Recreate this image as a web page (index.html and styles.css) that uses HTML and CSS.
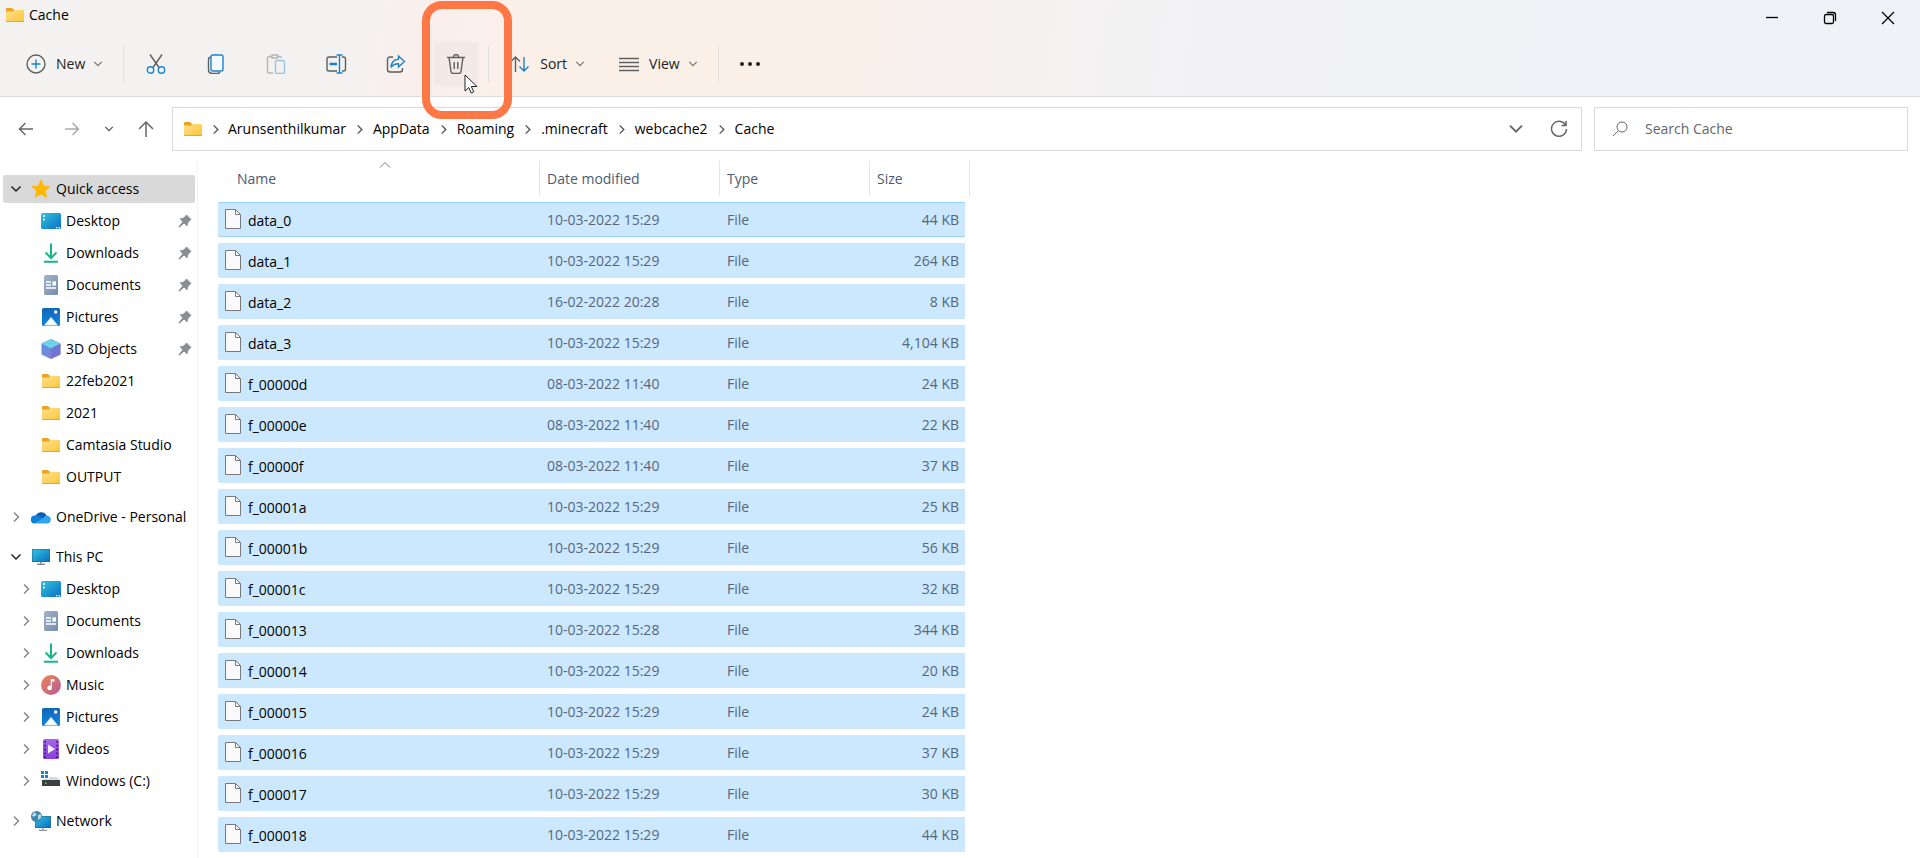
FILE: index.html
```html
<!DOCTYPE html>
<html lang="en">

<head>
    <meta charset="UTF-8">
    <meta name="viewport" content="width=device-width, initial-scale=1.0">
    <title>Cache</title>
    <link rel="stylesheet" href="styles.css">
</head>

<body>
    <!-- Shared icons -->
    <svg class="sprite" aria-hidden="true">
        <defs>
            <linearGradient id="gFolder" x1="0" y1="0" x2="1" y2="1">
                <stop offset="0" stop-color="#ffe08a"/>
                <stop offset="1" stop-color="#fcc53a"/>
            </linearGradient>
            <linearGradient id="gDesktop" x1="0" y1="0" x2="1" y2="1">
                <stop offset="0" stop-color="#2fc3e0"/>
                <stop offset="1" stop-color="#0b6fc0"/>
            </linearGradient>
            <linearGradient id="gDoc" x1="0" y1="0" x2="1" y2="1">
                <stop offset="0" stop-color="#a3b4cb"/>
                <stop offset="1" stop-color="#748bab"/>
            </linearGradient>
            <linearGradient id="gPic" x1="0" y1="0" x2="0" y2="1">
                <stop offset="0" stop-color="#1266b8"/>
                <stop offset="1" stop-color="#1286dd"/>
            </linearGradient>
            <linearGradient id="gMusic" x1="0" y1="0" x2="1" y2="1">
                <stop offset="0" stop-color="#f08650"/>
                <stop offset="1" stop-color="#b45a9c"/>
            </linearGradient>
            <linearGradient id="gVideo" x1="0" y1="0" x2="0" y2="1">
                <stop offset="0" stop-color="#a965ea"/>
                <stop offset="1" stop-color="#8a3fdc"/>
            </linearGradient>
            <linearGradient id="gCube" x1="0" y1="0" x2="1" y2="1">
                <stop offset="0" stop-color="#4c9be0"/>
                <stop offset="1" stop-color="#9b72d8"/>
            </linearGradient>
        </defs>
        <symbol id="folder" viewBox="0 0 20 20">
            <path d="M1 4a1 1 0 0 1 1-1h5l2 2v3H1z" fill="#eba51c"/>
            <path d="M1 6.500h7L9.500 5H18a1 1 0 0 1 1 1v10a1 1 0 0 1-1 1H2a1 1 0 0 1-1-1z" fill="url(#gFolder)"/>
            <path d="M1 16.500h18" stroke="#dfa63a"/>
        </symbol>
        <symbol id="star" viewBox="0 0 20 20">
            <path d="M10 1l2.700 6 6.300.6-4.800 4.300 1.500 6.500L10 15l-5.700 3.400 1.500-6.500L1 7.600 7.300 7z" fill="#ffb900" stroke="#fdb813" stroke-linejoin="round"/>
        </symbol>
        <symbol id="desktop" viewBox="0 0 20 20">
            <rect x="0" y="2" width="20" height="16" rx="1.500" fill="url(#gDesktop)"/>
            <path d="M2 4h2v2H2zM2 7.500h2v2H2zM15 16h1.500v1.500H15zM17.500 16H19v1.500h-1.500z" fill="#c7effa"/>
        </symbol>
        <symbol id="downloads" viewBox="0 0 20 20">
            <path d="M10 .5v14M4.500 9.500L10 15l5.500-5.500M3 18.700h14" fill="none" stroke="#18b78a" stroke-width="2"/>
        </symbol>
        <symbol id="documents" viewBox="0 0 20 20">
            <rect x="3" y="0" width="14" height="20" rx="1.500" fill="url(#gDoc)"/>
            <path d="M5 7h5M5 10h5M5 13h10" stroke="#fff" stroke-width="1.300"/>
            <path d="M11.500 6.300H15v4.300h-3.500z" fill="#fff"/>
        </symbol>
        <symbol id="pictures" viewBox="0 0 20 20">
            <rect x="1" y="1" width="18" height="18" rx="1.500" fill="url(#gPic)"/>
            <path d="M3 18.500l7-8.500 7 8.500z" fill="#f2f8fd"/>
            <circle cx="14.700" cy="5" r="1.700" fill="#fff"/>
        </symbol>
        <symbol id="cube" viewBox="0 0 20 20">
            <path d="M10 0l9.500 4.500v11L10 20 .5 15.500v-11z" fill="url(#gCube)"/>
            <path d="M10 0l9.500 4.500L10 9.500.5 4.500z" fill="#6fd0ea"/>
            <path d="M10 9.500l9.500-5v11L10 20z" fill="#6a72cc" opacity=".7"/>
        </symbol>
        <symbol id="cloud" viewBox="0 0 20 20">
            <path d="M4.500 9.500a6 6 0 0 1 11-1L9 15z" fill="#0a5cb4"/>
            <path d="M4 16.500a4 4 0 0 1-.5-8c3-.6 5 .4 8.500 3.400z" fill="#1181d8"/>
            <path d="M4 16.500l9.500-6.800c1-1 2.500-1.300 3.500-1a4 4 0 0 1-1 7.800z" fill="#2aa5ee"/>
        </symbol>
        <symbol id="pc" viewBox="0 0 20 20">
            <rect x="1" y="2" width="18" height="13" fill="#2b5f86"/>
            <rect x="1.500" y="2.500" width="17" height="12" fill="url(#gDesktop)"/>
            <path d="M9 15h2v2H9z" fill="#9aa4ad"/>
            <path d="M6 17.300h8" stroke="#6d7880" stroke-width="1.200"/>
        </symbol>
        <symbol id="music" viewBox="0 0 20 20">
            <circle cx="10" cy="10" r="10" fill="url(#gMusic)"/>
            <path d="M9.700 4h3.800v2.500h-2.600V13a2.300 2.300 0 1 1-1.200-2.200z" fill="#fff"/>
        </symbol>
        <symbol id="videos" viewBox="0 0 20 20">
            <rect x="2" y="0" width="16" height="20" rx="1.500" fill="url(#gVideo)"/>
            <path d="M4 2v17M16 2v17" stroke="#43207a" stroke-width="1.800" stroke-dasharray="1.800 2"/>
            <path d="M7 5.500l7 4.500-7 4.500z" fill="#f5ecff"/>
        </symbol>
        <symbol id="drive" viewBox="0 0 20 20">
            <path d="M0 0h3v3H0zM4 0h3v3H4zM0 4h3v3H0zM4 4h3v3H4z" fill="#1186d6"/>
            <path d="M8 6h8l3 3v1H1l2-2h5z" fill="#d9dadb"/>
            <rect x="1" y="9" width="18" height="6" fill="#3c4043"/>
            <path d="M4 11.500h1.500V13H4z" fill="#3fe05a"/>
        </symbol>
        <symbol id="network" viewBox="0 0 20 20">
            <path d="M4 5h16v12H4z" fill="#2b5f86"/>
            <path d="M4.500 5.500h15v11h-15z" fill="url(#gDesktop)"/>
            <path d="M12 17v2M8 19.300h8" stroke="#8b959c" stroke-width="1.200"/>
            <circle cx="5.500" cy="5.500" r="5.500" fill="#3f87ac"/>
            <path d="M3 1.500c2 0 3 2 2 3S1.500 6 1 4.500zM7 4l3-1v4L7 9z" fill="#b9dfe9"/>
        </symbol>
        <symbol id="pin" viewBox="0 0 14 14">
            <path d="M8.500 1L13 5.500l-1.300.8L9.500 9l-.3 2.700L6 9 1.500 13 1 12.500 5 8 2.300 4.800 5 4.500 7.700 2.300z" fill="#8b8f94" stroke="#8b8f94"/>
        </symbol>
        <symbol id="down" viewBox="0 0 12 12">
            <path d="M1.500 3.500L6 8l4.500-4.500" fill="none" stroke="currentColor" stroke-width="1.500"/>
        </symbol>
        <symbol id="right" viewBox="0 0 12 12">
            <path d="M4 1.500L8.500 6 4 10.500" fill="none" stroke="currentColor" stroke-width="1.500"/>
        </symbol>
        <symbol id="file" viewBox="0 0 16 20">
            <path d="M.5.5h10l5 5v14H.5z" fill="#fafafa" stroke="#77797c"/>
            <path d="M10.500.5v5h5" fill="none" stroke="#77797c"/>
        </symbol>
    </svg>

    <!-- Title bar and command bar -->
    <header class="ribbon">
        <div class="titlebar">
            <svg class="icon"><use href="#folder"/></svg>
            <h1 class="title">Cache</h1>
            <div class="window-buttons">
                <button aria-label="Minimize"><svg width="14" height="14" viewBox="0 0 14 14"><path d="M1 6.500h12"/></svg></button>
                <button aria-label="Restore"><svg width="14" height="14" viewBox="0 0 14 14"><rect x="1.500" y="3.500" width="9" height="9" rx="1.500"/><path d="M4 1.500h6a2.500 2.500 0 0 1 2.500 2.500v6"/></svg></button>
                <button aria-label="Close"><svg width="14" height="14" viewBox="0 0 14 14"><path d="M1 1l12 12M13 1L1 13"/></svg></button>
            </div>
        </div>
        <div class="toolbar">
            <button class="tool tool-new">
                <svg width="20" height="20" viewBox="0 0 20 20"><circle cx="10" cy="10" r="9"/><path class="blue" d="M10 5.500v9M5.500 10h9"/></svg>
                New
                <svg class="caret"><use href="#down"/></svg>
            </button>
            <span class="divider"></span>
            <div class="tool-group">
                <button class="tool" aria-label="Cut"><svg width="20" height="20" viewBox="0 0 20 20"><path d="M4 .5l9 13M16 .5l-9 13"/><g class="blue"><circle cx="4.500" cy="16" r="3.200"/><circle cx="15.500" cy="16" r="3.200"/></g></svg></button>
                <button class="tool" aria-label="Copy"><svg width="20" height="20" viewBox="0 0 20 20"><path d="M4.500 3Q2.500 3.500 2.500 5.500v10q0 4 4 4h5q2 0 2.500-1.500"/><rect class="blue" x="5" y="1" width="12" height="16" rx="2" fill="#f3f9fe"/></svg></button>
                <button class="tool faded" aria-label="Paste"><svg width="20" height="20" viewBox="0 0 20 20"><path d="M7 19H3a1.500 1.500 0 0 1-1.500-1.500V4A1.500 1.500 0 0 1 3 2.500h2.500M12 2.500h2A1.500 1.500 0 0 1 15.500 4M6 1h5.500v3H6z"/><rect class="blue" x="9.500" y="6.500" width="9" height="13" rx="1.500"/></svg></button>
                <button class="tool" aria-label="Rename"><svg width="22" height="20" viewBox="0 0 22 20"><path d="M12 17H4a2 2 0 0 1-2-2V5a2 2 0 0 1 2-2h8M17 3h1.500a2 2 0 0 1 2 2v10a2 2 0 0 1-2 2H17"/><path class="blue" d="M14.500 1v18M11.500 1h6M11.500 19h6"/><path class="blue thick" d="M4.500 10H12"/></svg></button>
                <button class="tool" aria-label="Share"><svg width="20" height="20" viewBox="0 0 20 20"><path d="M7 3H4a2.500 2.500 0 0 0-2.500 2.500v10A2.500 2.500 0 0 0 4 18h10a2.500 2.500 0 0 0 2.500-2.500V14"/><path class="blue" d="M12.500 2l6 5.500-6 5.500v-3.300C8.500 9.700 6.500 11 5 13.500c.3-5 3-8 7.500-8.200z"/></svg></button>
                <button class="tool active" aria-label="Delete">
                    <svg width="20" height="20" viewBox="0 0 20 20"><path d="M1 3.500h18M3 3.500l2 14q.3 2 2 2h6q1.700 0 2-2l2-14M7.500 3a2.500 2.500 0 0 1 5 0M8.200 8v7M11.800 8v7"/></svg>
                    <span class="callout"></span>
                    <svg class="cursor" width="14" height="20" viewBox="0 0 14 20"><path d="M1 1v16l3.700-3.500 2.500 5.500 2.600-1.200-2.500-5.300H13z" fill="#fff" stroke="#222" stroke-width="1"/></svg>
                </button>
            </div>
            <span class="divider"></span>
            <button class="tool tool-sort">
                <svg width="20" height="20" viewBox="0 0 20 20"><path d="M5.500 18V3M1 7.500L5.500 3l4.500 4.500"/><path class="blue" d="M14 3v14M9.500 12.500L14 17l4.500-4.500"/></svg>
                Sort
                <svg class="caret"><use href="#down"/></svg>
            </button>
            <button class="tool tool-view">
                <svg width="20" height="20" viewBox="0 0 20 20"><path d="M0 4.500h20M0 8.500h20M0 12.500h20M0 16.500h20"/></svg>
                View
                <svg class="caret"><use href="#down"/></svg>
            </button>
            <span class="divider"></span>
            <button class="tool tool-more" aria-label="See more"><svg width="22" height="20" viewBox="0 0 22 20"><g class="dots"><circle cx="3" cy="10" r="2"/><circle cx="11" cy="10" r="2"/><circle cx="19" cy="10" r="2"/></g></svg></button>
        </div>
    </header>

    <!-- Navigation -->
    <div class="navbar">
        <div class="nav-buttons">
            <button aria-label="Back"><svg width="16" height="16" viewBox="0 0 16 16"><path d="M15 8H2M7.500 2L1.500 8l6 6"/></svg></button>
            <button class="disabled" aria-label="Forward"><svg width="16" height="16" viewBox="0 0 16 16"><path d="M1 8h13M8.500 2l6 6-6 6"/></svg></button>
            <button class="recent" aria-label="Recent locations"><svg width="10" height="10"><use href="#down"/></svg></button>
            <button aria-label="Up"><svg width="18" height="18" viewBox="0 0 18 18"><path d="M9 17V2M2 9l7-7 7 7"/></svg></button>
        </div>
        <nav class="address">
            <svg class="icon"><use href="#folder"/></svg>
            <svg class="sep"><use href="#right"/></svg>
            <a href="#">Arunsenthilkumar</a>
            <svg class="sep"><use href="#right"/></svg>
            <a href="#">AppData</a>
            <svg class="sep"><use href="#right"/></svg>
            <a href="#">Roaming</a>
            <svg class="sep"><use href="#right"/></svg>
            <a href="#">.minecraft</a>
            <svg class="sep"><use href="#right"/></svg>
            <a href="#">webcache2</a>
            <svg class="sep"><use href="#right"/></svg>
            <a href="#">Cache</a>
            <div class="address-tools">
                <button aria-label="Previous locations"><svg width="16" height="16"><use href="#down"/></svg></button>
                <button aria-label="Refresh"><svg width="18" height="18" viewBox="0 0 18 18"><path d="M15.500 5A7.500 7.500 0 1 0 16.500 9M16 1v4.500h-4.500"/></svg></button>
            </div>
        </nav>
        <label class="search">
            <svg width="16" height="16" viewBox="0 0 16 16"><circle cx="10" cy="6" r="5"/><path d="M6.500 9.500L1 15"/></svg>
            <input type="text" placeholder="Search Cache" aria-label="Search Cache">
        </label>
    </div>

    <div class="content">
        <!-- Sidebar -->
        <aside class="sidebar">
            <ul>
                <li><a class="root selected" href="#"><svg class="arrow open"><use href="#down"/></svg><svg class="icon"><use href="#star"/></svg>Quick access</a></li>
                <li><a href="#"><svg class="icon"><use href="#desktop"/></svg>Desktop<svg class="pin"><use href="#pin"/></svg></a></li>
                <li><a href="#"><svg class="icon"><use href="#downloads"/></svg>Downloads<svg class="pin"><use href="#pin"/></svg></a></li>
                <li><a href="#"><svg class="icon"><use href="#documents"/></svg>Documents<svg class="pin"><use href="#pin"/></svg></a></li>
                <li><a href="#"><svg class="icon"><use href="#pictures"/></svg>Pictures<svg class="pin"><use href="#pin"/></svg></a></li>
                <li><a href="#"><svg class="icon"><use href="#cube"/></svg>3D Objects<svg class="pin"><use href="#pin"/></svg></a></li>
                <li><a href="#"><svg class="icon"><use href="#folder"/></svg>22feb2021</a></li>
                <li><a href="#"><svg class="icon"><use href="#folder"/></svg>2021</a></li>
                <li><a href="#"><svg class="icon"><use href="#folder"/></svg>Camtasia Studio</a></li>
                <li><a href="#"><svg class="icon"><use href="#folder"/></svg>OUTPUT</a></li>
            </ul>
            <ul>
                <li><a class="root" href="#"><svg class="arrow"><use href="#right"/></svg><svg class="icon"><use href="#cloud"/></svg>OneDrive - Personal</a></li>
            </ul>
            <ul>
                <li><a class="root" href="#"><svg class="arrow open"><use href="#down"/></svg><svg class="icon"><use href="#pc"/></svg>This PC</a></li>
                <li><a class="child" href="#"><svg class="arrow"><use href="#right"/></svg><svg class="icon"><use href="#desktop"/></svg>Desktop</a></li>
                <li><a class="child" href="#"><svg class="arrow"><use href="#right"/></svg><svg class="icon"><use href="#documents"/></svg>Documents</a></li>
                <li><a class="child" href="#"><svg class="arrow"><use href="#right"/></svg><svg class="icon"><use href="#downloads"/></svg>Downloads</a></li>
                <li><a class="child" href="#"><svg class="arrow"><use href="#right"/></svg><svg class="icon"><use href="#music"/></svg>Music</a></li>
                <li><a class="child" href="#"><svg class="arrow"><use href="#right"/></svg><svg class="icon"><use href="#pictures"/></svg>Pictures</a></li>
                <li><a class="child" href="#"><svg class="arrow"><use href="#right"/></svg><svg class="icon"><use href="#videos"/></svg>Videos</a></li>
                <li><a class="child" href="#"><svg class="arrow"><use href="#right"/></svg><svg class="icon"><use href="#drive"/></svg>Windows (C:)</a></li>
            </ul>
            <ul>
                <li><a class="root" href="#"><svg class="arrow"><use href="#right"/></svg><svg class="icon"><use href="#network"/></svg>Network</a></li>
            </ul>
        </aside>

        <!-- File list -->
        <main class="files">
            <table>
                <thead>
                    <tr>
                        <th class="col-name"><svg class="sorted" viewBox="0 0 12 6"><path d="M1 5.500l5-5 5 5"/></svg>Name</th>
                        <th class="col-date">Date modified</th>
                        <th class="col-type">Type</th>
                        <th class="col-size">Size</th>
                    </tr>
                </thead>
                <tbody>
                    <tr class="focused"><td><svg class="file"><use href="#file"/></svg>data_0</td><td>10-03-2022 15:29</td><td>File</td><td>44 KB</td></tr>
                    <tr><td><svg class="file"><use href="#file"/></svg>data_1</td><td>10-03-2022 15:29</td><td>File</td><td>264 KB</td></tr>
                    <tr><td><svg class="file"><use href="#file"/></svg>data_2</td><td>16-02-2022 20:28</td><td>File</td><td>8 KB</td></tr>
                    <tr><td><svg class="file"><use href="#file"/></svg>data_3</td><td>10-03-2022 15:29</td><td>File</td><td>4,104 KB</td></tr>
                    <tr><td><svg class="file"><use href="#file"/></svg>f_00000d</td><td>08-03-2022 11:40</td><td>File</td><td>24 KB</td></tr>
                    <tr><td><svg class="file"><use href="#file"/></svg>f_00000e</td><td>08-03-2022 11:40</td><td>File</td><td>22 KB</td></tr>
                    <tr><td><svg class="file"><use href="#file"/></svg>f_00000f</td><td>08-03-2022 11:40</td><td>File</td><td>37 KB</td></tr>
                    <tr><td><svg class="file"><use href="#file"/></svg>f_00001a</td><td>10-03-2022 15:29</td><td>File</td><td>25 KB</td></tr>
                    <tr><td><svg class="file"><use href="#file"/></svg>f_00001b</td><td>10-03-2022 15:29</td><td>File</td><td>56 KB</td></tr>
                    <tr><td><svg class="file"><use href="#file"/></svg>f_00001c</td><td>10-03-2022 15:29</td><td>File</td><td>32 KB</td></tr>
                    <tr><td><svg class="file"><use href="#file"/></svg>f_000013</td><td>10-03-2022 15:28</td><td>File</td><td>344 KB</td></tr>
                    <tr><td><svg class="file"><use href="#file"/></svg>f_000014</td><td>10-03-2022 15:29</td><td>File</td><td>20 KB</td></tr>
                    <tr><td><svg class="file"><use href="#file"/></svg>f_000015</td><td>10-03-2022 15:29</td><td>File</td><td>24 KB</td></tr>
                    <tr><td><svg class="file"><use href="#file"/></svg>f_000016</td><td>10-03-2022 15:29</td><td>File</td><td>37 KB</td></tr>
                    <tr><td><svg class="file"><use href="#file"/></svg>f_000017</td><td>10-03-2022 15:29</td><td>File</td><td>30 KB</td></tr>
                    <tr><td><svg class="file"><use href="#file"/></svg>f_000018</td><td>10-03-2022 15:29</td><td>File</td><td>44 KB</td></tr>
                </tbody>
            </table>
        </main>
    </div>
</body>

</html>
```
FILE: styles.css
```css
/* General Styles */
* {
    margin: 0;
    padding: 0;
    box-sizing: border-box;
}

body {
    font-family: "Open Sans", "Noto Sans", sans-serif;
    font-size: 14px;
    line-height: 20px;
    color: #000;
    background-color: #fff;
}

button {
    display: flex;
    align-items: center;
    justify-content: center;
    border: none;
    background: none;
    font: inherit;
    color: inherit;
}

a {
    color: inherit;
    text-decoration: none;
}

ul {
    list-style-type: none;
}

svg {
    flex-shrink: 0;
    fill: none;
}

.sprite {
    position: absolute;
    width: 0;
    height: 0;
}

.icon {
    width: 20px;
    height: 20px;
}

/* Ribbon */
.ribbon {
    height: 97px;
    border-bottom: 1px solid #dcdcdc;
    background: linear-gradient(100deg, #f3f2f1 0%, #f3f2f1 18%, #faefec 22%, #fbf0e8 28%, #fbf0e8 44%, #f7f0ee 48%, #f3f2f3 58%, #eff1f6 80%, #eff2f6 100%);
}

.titlebar {
    display: flex;
    align-items: center;
    height: 30px;
    padding-left: 5px;
}

.title {
    margin-left: 4px;
    font-size: 14px;
    font-weight: normal;
}

.window-buttons {
    display: flex;
    margin-left: auto;
    padding-top: 6px;
    padding-right: 3px;
}

.window-buttons button {
    width: 58px;
    height: 30px;
}

.window-buttons svg {
    stroke: #000;
    stroke-width: 1.3;
}

/* Command bar */
.toolbar {
    display: flex;
    align-items: center;
    height: 66px;
    padding-top: 2px;
    padding-left: 16px;
}

.tool {
    position: relative;
    min-width: 44px;
    height: 44px;
    gap: 10px;
    border-radius: 4px;
    color: #222;
}

.tool svg {
    stroke: #5f5f5f;
    stroke-width: 1.4;
}

.tool .blue {
    stroke: #1a83d0;
}

.tool .thick {
    stroke-width: 2.5;
}

.tool .dots {
    fill: #222;
    stroke: none;
}

.tool .caret {
    width: 10px;
    height: 10px;
    margin-left: -2px;
    color: #777;
    stroke: none;
}

.tool-new {
    margin-right: 10px;
    padding: 0 10px;
}

.tool-group {
    display: flex;
    gap: 16px;
    padding: 0 10px;
}

.faded svg {
    opacity: 0.4;
}

.active {
    background-color: #f3e9e6;
}

.tool-sort {
    margin-left: 11px;
    padding: 0 10px;
}

.tool-view {
    margin: 0 10px 0 14px;
    padding: 0 10px;
}

.tool-more {
    margin-left: 9px;
}

.divider {
    width: 1px;
    height: 38px;
    background-color: #e4e0de;
}

/* Marker around the delete button */
.callout {
    position: absolute;
    top: -41px;
    left: -12px;
    z-index: 1;
    width: 90px;
    height: 118px;
    border: 8px solid #ff7744;
    border-radius: 20px;
}

.tool .cursor {
    position: absolute;
    top: 32px;
    left: 30px;
    z-index: 2;
}

/* Navigation */
.navbar {
    display: flex;
    padding: 10px 12px 10px 3px;
}

.nav-buttons {
    display: flex;
    width: 169px;
}

.nav-buttons button {
    width: 46px;
    height: 44px;
    color: #555;
}

.nav-buttons .recent {
    width: 28px;
}

.nav-buttons svg,
.address-tools svg,
.search svg {
    stroke: #666;
    stroke-width: 1.5;
}

.nav-buttons .disabled svg {
    stroke: #aaa;
}

.address {
    display: flex;
    flex: 1;
    align-items: center;
    height: 44px;
    padding-left: 10px;
    border: 1px solid #d9d9d9;
}

.sep {
    width: 11px;
    height: 11px;
    margin: 0 8px;
    color: #555;
}

.icon + .sep {
    margin: 0 7px;
}

.address-tools {
    display: flex;
    margin-left: auto;
    padding-right: 1px;
}

.address-tools button {
    width: 43px;
    height: 42px;
    color: #666;
}

.search {
    display: flex;
    align-items: center;
    width: 314px;
    height: 44px;
    margin-left: 12px;
    padding-left: 17px;
    border: 1px solid #d9d9d9;
}

.search svg {
    stroke-width: 1;
}

.search input {
    flex: 1;
    min-width: 0;
    margin-left: 17px;
    border: none;
    outline: none;
    background: none;
    font: inherit;
}

.search input::placeholder {
    color: #666;
    opacity: 1;
}

/* Sidebar */
.content {
    display: flex;
}

.sidebar {
    width: 198px;
    padding: 11px 2px 0 3px;
    border-right: 1px solid #f3f3f3;
}

.sidebar ul {
    margin-bottom: 8px;
}

.sidebar ul:last-child {
    margin-bottom: 0;
}

.sidebar li {
    height: 32px;
    padding-top: 3px;
}

.sidebar a {
    display: flex;
    align-items: center;
    height: 28px;
    padding-left: 38px;
    white-space: nowrap;
}

.sidebar .icon {
    margin-right: 5px;
}

.sidebar .root {
    padding-left: 7px;
}

.sidebar .child {
    padding-left: 17px;
}

.sidebar .selected {
    border-radius: 2px;
    background-color: #d9d9d9;
}

.arrow {
    width: 12px;
    height: 12px;
    margin-right: 9px;
    color: #888;
}

.arrow.open {
    color: #222;
}

.pin {
    width: 14px;
    height: 14px;
    margin-left: auto;
    margin-right: 3px;
}

/* File list */
.files {
    flex: 1;
    padding-left: 20px;
}

table {
    width: 752px;
    table-layout: fixed;
    border-collapse: separate;
    border-spacing: 0 6px;
    margin-top: -6px;
}

th {
    position: relative;
    height: 35px;
    padding-left: 7px;
    border-right: 1px solid #e5e5e5;
    font-weight: normal;
    text-align: left;
    color: #4c5a70;
}

td {
    height: 35px;
    padding-top: 1px;
    padding-left: 7px;
    background-color: #cce8ff;
    background-clip: padding-box;
    color: #56667c;
}

.col-name {
    width: 322px;
    padding-left: 19px;
}

.col-date {
    width: 180px;
}

.col-type {
    width: 150px;
}

.sorted {
    position: absolute;
    top: 1px;
    left: 50%;
    width: 12px;
    height: 6px;
    stroke: #777;
}

td:first-child {
    padding-top: 0;
    border-radius: 2px 0 0 2px;
    color: #000;
}

/* Keeps the rows short of the last header divider */
td:last-child {
    padding-right: 6px;
    border-right: 5px solid #fff;
    text-align: right;
}

.focused td {
    box-shadow: inset 0 1px #99d1ff, inset 0 -1px #99d1ff;
}

.file {
    width: 16px;
    height: 20px;
    margin-right: 7px;
    vertical-align: -3px;
}
```
